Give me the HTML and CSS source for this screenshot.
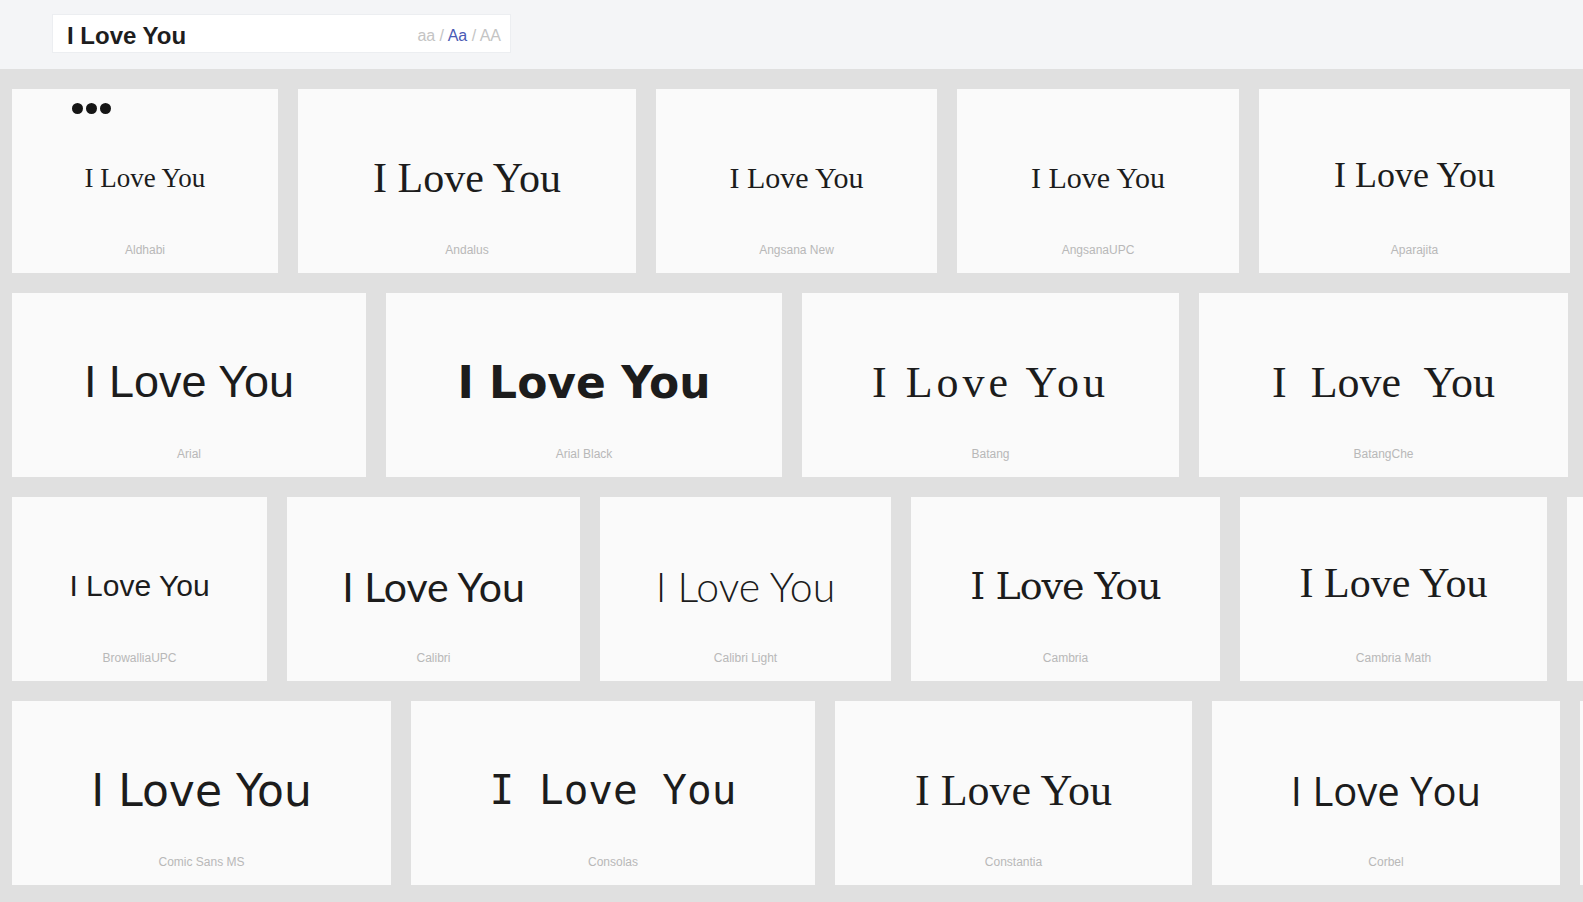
FILE: index.html
```html
<!DOCTYPE html>
<html lang="en">

<head>
  <meta charset="UTF-8" />
  <meta name="viewport" content="width=device-width, initial-scale=1.0" />
  <title>Wordmark</title>
  <link rel="stylesheet" href="styles.css">
</head>

<body>
  <header class="topbar">
    <div class="search">
      <input class="search-input" type="text" value="I Love You" />
      <div class="case-switch">
        <span>aa</span> / <span class="active">Aa</span> / <span>AA</span>
      </div>
    </div>
  </header>

  <main class="board">
    <div class="row">
      <div class="card card-aldhabi">
        <span class="menu-dots"><i></i><i></i><i></i></span>
        <div class="sample">I Love You</div>
        <div class="font-name">Aldhabi</div>
      </div>
      <div class="card card-andalus">
        <div class="sample">I Love You</div>
        <div class="font-name">Andalus</div>
      </div>
      <div class="card card-angsana">
        <div class="sample">I Love You</div>
        <div class="font-name">Angsana New</div>
      </div>
      <div class="card card-angsana-upc">
        <div class="sample">I Love You</div>
        <div class="font-name">AngsanaUPC</div>
      </div>
      <div class="card card-aparajita">
        <div class="sample">I Love You</div>
        <div class="font-name">Aparajita</div>
      </div>
    </div>

    <div class="row">
      <div class="card card-arial">
        <div class="sample">I Love You</div>
        <div class="font-name">Arial</div>
      </div>
      <div class="card card-arial-black">
        <div class="sample">I Love You</div>
        <div class="font-name">Arial Black</div>
      </div>
      <div class="card card-batang">
        <div class="sample">I Love You</div>
        <div class="font-name">Batang</div>
      </div>
      <div class="card card-batangche">
        <div class="sample">I Love You</div>
        <div class="font-name">BatangChe</div>
      </div>
    </div>

    <div class="row">
      <div class="card card-browallia">
        <div class="sample">I Love You</div>
        <div class="font-name">BrowalliaUPC</div>
      </div>
      <div class="card card-calibri">
        <div class="sample">I Love You</div>
        <div class="font-name">Calibri</div>
      </div>
      <div class="card card-calibri-light">
        <div class="sample">I Love You</div>
        <div class="font-name">Calibri Light</div>
      </div>
      <div class="card card-cambria">
        <div class="sample">I Love You</div>
        <div class="font-name">Cambria</div>
      </div>
      <div class="card card-cambria-math">
        <div class="sample">I Love You</div>
        <div class="font-name">Cambria Math</div>
      </div>
      <!-- next card, still loading -->
      <div class="card card-pending"></div>
    </div>

    <div class="row">
      <div class="card card-comic">
        <div class="sample">I Love You</div>
        <div class="font-name">Comic Sans MS</div>
      </div>
      <div class="card card-consolas">
        <div class="sample">I Love You</div>
        <div class="font-name">Consolas</div>
      </div>
      <div class="card card-constantia">
        <div class="sample">I Love You</div>
        <div class="font-name">Constantia</div>
      </div>
      <div class="card card-corbel">
        <div class="sample">I Love You</div>
        <div class="font-name">Corbel</div>
      </div>
      <div class="card card-pending"></div>
    </div>
  </main>
</body>

</html>
```

FILE: styles.css
```css
body {
  margin: 0;
  font-family: "Liberation Sans", Arial, sans-serif;
  background: #e0e0e0;
  overflow: hidden;
}

/* top bar with the text field */
.topbar {
  height: 69px;
  box-sizing: border-box;
  padding: 14px 52px 0;
  background: #f4f5f7;
}

.search {
  width: 459px;
  height: 39px;
  box-sizing: border-box;
  display: flex;
  align-items: center;
  padding: 5px 9px 0 14px;
  background: #fff;
  border: 1px solid #eceef1;
}

.search-input {
  flex: 1;
  min-width: 0;
  border: none;
  outline: none;
  padding: 0;
  background: transparent;
  font: bold 24px "Liberation Sans", Arial, sans-serif;
  color: #1e1e1e;
}

.case-switch {
  font-size: 16px;
  color: #c4c4c4;
  white-space: nowrap;
}

.case-switch .active {
  color: #4a5ab4;
}

/* card grid */
.board {
  padding: 20px 12px;
}

.row {
  display: flex;
  gap: 20px;
  margin-bottom: 20px;
}

.card {
  flex: none;
  position: relative;
  height: 184px;
  box-sizing: border-box;
  padding-top: 24px;
  display: flex;
  flex-direction: column;
  background: #fafafa;
}

.sample {
  flex: 1;
  display: flex;
  align-items: center;
  justify-content: center;
  line-height: 1;
  white-space: nowrap;
  color: #1c1c1c;
}

.font-name {
  padding-bottom: 16px;
  text-align: center;
  font-size: 12px;
  line-height: 14px;
  color: #b8b8b8;
}

.menu-dots {
  position: absolute;
  left: 60px;
  top: 14px;
  display: flex;
  gap: 3px;
}

.menu-dots i {
  width: 11px;
  height: 11px;
  border-radius: 50%;
  background: #151515;
}

/* per-font widths and faces */
.card-aldhabi { width: 266px; }
.card-aldhabi .sample { font: 27px "Liberation Serif", serif; }

.card-andalus { width: 338px; }
.card-andalus .sample { font: 42px "Liberation Serif", serif; }

.card-angsana { width: 281px; }
.card-angsana .sample { font: 30px "Liberation Serif", serif; }

.card-angsana-upc { width: 282px; }
.card-angsana-upc .sample { font: 30px "Liberation Serif", serif; }

.card-aparajita { width: 311px; }
.card-aparajita .sample { font: 36px "Liberation Serif", serif; padding-bottom: 7px; }

.card-arial { width: 354px; }
.card-arial .sample { font: 45px "Liberation Sans", Arial, sans-serif; }

.card-arial-black { width: 396px; }
.card-arial-black .sample { font: bold 44px "DejaVu Sans", sans-serif; }

.card-batang { width: 377px; }
.card-batang .sample { font: 44px "Liberation Serif", serif; letter-spacing: 4px; }

.card-batangche { width: 369px; }
.card-batangche .sample { font: 44px "Liberation Serif", serif; word-spacing: 13px; }

.card-browallia { width: 255px; }
.card-browallia .sample { font: 30px "Liberation Sans", Arial, sans-serif; }

.card-calibri { width: 293px; }
.card-calibri .sample { font: 41px Lato, sans-serif; }

.card-calibri-light { width: 291px; }
.card-calibri-light .sample { font: 300 41px Lato, sans-serif; }

.card-cambria { width: 309px; }
.card-cambria .sample { font: 38px "DejaVu Serif", serif; letter-spacing: -1px; }

.card-cambria-math { width: 307px; }
.card-cambria-math .sample { font: 42px "Liberation Serif", serif; padding-bottom: 7px; }

.card-comic { width: 379px; }
.card-comic .sample { font: 44px "DejaVu Sans", sans-serif; }

.card-consolas { width: 404px; }
.card-consolas .sample { font: 41px "DejaVu Sans Mono", monospace; }

.card-constantia { width: 357px; }
.card-constantia .sample { font: 44px "Liberation Serif", serif; }

.card-corbel { width: 348px; }
.card-corbel .sample { font: 40px "Open Sans", sans-serif; }

.card-pending { width: 300px; }
```
